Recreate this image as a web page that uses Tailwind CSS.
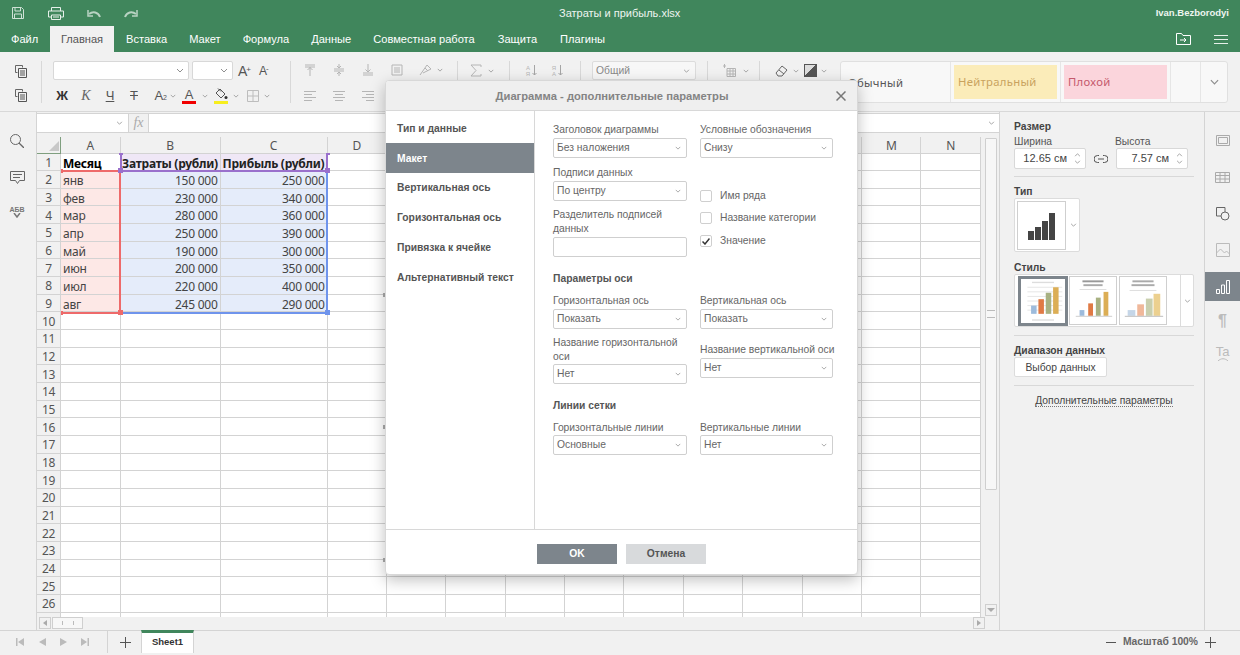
<!DOCTYPE html>
<html lang="ru">
<head>
  <meta charset="UTF-8" />
  <title>Затраты и прибыль.xlsx</title>
  <script src="https://cdn.jsdelivr.net/npm/@tailwindcss/browser@4"></script>
</head>
<body class="w-[1240px] h-[655px] overflow-hidden bg-[#f1f1f1] text-[#444] text-[10.3px] font-['Liberation_Sans',Arial,sans-serif]">

  <svg class="hidden">
    <symbol id="chev" viewBox="0 0 8 5"><path d="M1 1l3 3 3-3" fill="none" stroke="#8f8f8f" stroke-width="1"/></symbol>
    <symbol id="copy" viewBox="0 0 14 14"><path d="M1.5 1.5h7v2M1.5 1.5v7h2" fill="none" stroke="#666"/><path d="M4.5 4.5h8v9h-8z" fill="#f1f1f1" stroke="#555"/><path d="M6 7h5M6 9h5M6 11h5" stroke="#555"/></symbol>
  </svg>

  <!-- Header -->
  <header class="h-[52px] bg-[#40865c] text-white">
    <div class="h-[26px] flex items-center relative">
      <div class="flex items-center">
        <svg class="w-[12px] h-[12px] ml-[12px]" viewBox="0 0 12 12" fill="none" stroke="#cfe2d6"><path d="M.5.5h9l2 2v9H.5z"/><path d="M3 .5v3.5h5.5V.5M2.5 11.5V7h7v4.5"/></svg>
        <svg class="w-[16px] h-[13px] ml-[24px]" viewBox="0 0 16 13" fill="none" stroke="#e6f0ea"><path d="M3.500 4V.5h9V4M3.500 10H.5V4h15v6h-3"/><path d="M3.500 8h9v4.500h-9zM5 10h6"/></svg>
        <svg class="w-[14px] h-[9px] ml-[23px]" viewBox="0 0 14 9" fill="none" stroke="#b9d3c3" stroke-width="2"><path d="M13 8C11 3 6 2 2 5"/><path d="M1 1v6h5" stroke-width="1.500"/></svg>
        <svg class="w-[14px] h-[9px] ml-[23px]" viewBox="0 0 14 9" fill="none" stroke="#b9d3c3" stroke-width="2"><path d="M1 8c2-5 7-6 11-3"/><path d="M13 1v6H8" stroke-width="1.500"/></svg>
      </div>
      <div class="absolute left-[559px] top-[6px] text-[11px] leading-[14px] text-[#eef5f0]">Затраты и прибыль.xlsx</div>
      <div class="ml-auto mr-[11px] text-[9.500px] font-bold text-[#eef5f0]">Ivan.Bezborodyi</div>
    </div>
    <div class="h-[26px] flex items-end text-[11.100px]">
      <div class="w-[50px] h-[26px] leading-[26px] pl-[11px]">Файл</div>
      <div class="w-[64px] h-[26px] leading-[26px] text-center bg-[#f1f1f1] text-[#555]">Главная</div>
      <div class="h-[26px] leading-[26px] ml-[12px]">Вставка</div>
      <div class="h-[26px] leading-[26px] ml-[22px]">Макет</div>
      <div class="h-[26px] leading-[26px] ml-[22px]">Формула</div>
      <div class="h-[26px] leading-[26px] ml-[22px]">Данные</div>
      <div class="h-[26px] leading-[26px] ml-[22px]">Совместная работа</div>
      <div class="h-[26px] leading-[26px] ml-[23px]">Защита</div>
      <div class="h-[26px] leading-[26px] ml-[23px]">Плагины</div>
      <svg class="w-[15px] h-[12px] ml-auto mb-[7px]" viewBox="0 0 15 12" fill="none" stroke="#fff"><path d="M.5 11.500V.5h5l1.500 2h7.500v9z"/><path d="M4 7h6M8 5l2 2-2 2"/></svg>
      <svg class="w-[14px] h-[9px] ml-[23px] mr-[12px] mb-[8px]" viewBox="0 0 14 9" stroke="#e6f0ea"><path d="M0 .5h14M0 4.500h14M0 8.500h14"/></svg>
    </div>
  </header>

  <!-- Toolbar -->
  <div class="h-[60px] bg-[#f1f1f1] flex pt-[9px] text-[#555] border-b border-[#d8d8d8]">
    <div class="w-[41px] h-[44px] flex flex-col items-center justify-between py-[3px]">
      <svg class="w-[14px] h-[14px]"><use href="#copy"/></svg>
      <svg class="w-[14px] h-[14px]"><use href="#copy"/></svg>
    </div>
    <div class="w-px h-[42px] bg-[#d8d8d8]"></div>
    <div class="w-[248px] h-[44px] pl-[11px] flex flex-col justify-between">
      <div class="flex items-center h-[19px]">
        <div class="w-[136px] h-[19px] bg-white border border-[#d8d8d8] rounded-[2px] flex items-center justify-end pr-[4px]"><svg class="w-[8px] h-[5px]"><use href="#chev"/></svg></div>
        <div class="w-[41px] h-[19px] ml-[3px] bg-white border border-[#d8d8d8] rounded-[2px] flex items-center justify-end pr-[4px]"><svg class="w-[8px] h-[5px]"><use href="#chev"/></svg></div>
        <div class="ml-[5px] w-[14px] text-[14px] leading-[14px]">A<sup class="text-[8px] -ml-px">+</sup></div>
        <div class="ml-[7px] w-[14px] text-[12px] leading-[14px]">A<sup class="text-[8px] -ml-px">-</sup></div>
      </div>
      <div class="flex items-center h-[19px] text-[13px] -ml-[3px]">
        <div class="w-[24px] text-center font-bold text-[#333]">Ж</div>
        <div class="w-[24px] text-center italic font-['Liberation_Serif',serif] text-[14px] text-[#666]">К</div>
        <div class="w-[24px] text-center underline">Ч</div>
        <div class="w-[24px] text-center line-through">Т</div>
        <div class="w-[21px] text-right">A<span class="text-[7px]">2</span></div>
        <svg class="w-[6px] h-[4px] ml-[3px]"><use href="#chev"/></svg>
        <div class="w-[14px] ml-[6px] text-center leading-[13px] border-b-[3px] border-[#f00000]">A</div>
        <svg class="w-[6px] h-[4px] ml-[6px]"><use href="#chev"/></svg>
        <div class="w-[14px] ml-[6px] h-[16px] border-b-[3px] border-[#f7ee1e] flex justify-center">
          <svg class="w-[13px] h-[12px]" viewBox="0 0 13 12" fill="none" stroke="#555"><path d="M5 1l5 5-4 4-5-5z"/><path d="M3 .5l3 3"/><circle cx="11" cy="9.500" r="1.500" fill="#333" stroke="none"/></svg>
        </div>
        <svg class="w-[6px] h-[4px] ml-[5px]"><use href="#chev"/></svg>
        <svg class="w-[12px] h-[12px] ml-[8px]" viewBox="0 0 12 12" fill="none" stroke="#bdbdbd"><path d="M.5.5h11v11H.5zM6 .5v11M.5 6h11"/></svg>
        <svg class="w-[6px] h-[4px] ml-[5px]"><use href="#chev"/></svg>
      </div>
    </div>
    <div class="w-px h-[42px] bg-[#d8d8d8]"></div>
    <div class="w-[166px] h-[44px] flex flex-col justify-between pl-[13px] py-[3px]">
      <div class="flex items-center h-[12px]">
        <svg class="w-[12px] h-[12px]" viewBox="0 0 12 12" fill="none" stroke="#b5b5b5"><path d="M1 1h10M1 3h10M6 3v9M3.500 6L6 3.500 8.500 6"/></svg>
        <svg class="w-[12px] h-[12px] ml-[17px]" viewBox="0 0 12 12" fill="none" stroke="#b5b5b5"><path d="M1 5h10M1 7h10M6 0v4M6 8v4M4 2l2 2 2-2M4 10l2-2 2 2"/></svg>
        <svg class="w-[12px] h-[12px] ml-[17px]" viewBox="0 0 12 12" fill="none" stroke="#b5b5b5"><path d="M1 9h10M1 11h10M6 0v8M3.500 5.500L6 8l2.500-2.500"/></svg>
        <svg class="w-[12px] h-[12px] ml-[17px]" viewBox="0 0 12 12" fill="none" stroke="#b5b5b5"><path d="M1 1h10v10H1zM3 4h6M3 6h6M3 8h6"/></svg>
        <svg class="w-[13px] h-[12px] ml-[16px]" viewBox="0 0 13 12" fill="none" stroke="#b5b5b5"><path d="M1 11L8 1l4 4-8 4M6 4l3 3"/></svg>
        <svg class="w-[6px] h-[4px] ml-[5px]"><use href="#chev"/></svg>
      </div>
      <div class="flex items-center h-[12px]">
        <svg class="w-[12px] h-[11px]" viewBox="0 0 12 11" stroke="#b5b5b5"><path d="M0 .5h12M0 3.500h8M0 6.500h12M0 9.500h8"/></svg>
        <svg class="w-[12px] h-[11px] ml-[17px]" viewBox="0 0 12 11" stroke="#b5b5b5"><path d="M0 .5h12M2 3.500h8M0 6.500h12M2 9.500h8"/></svg>
        <svg class="w-[12px] h-[11px] ml-[17px]" viewBox="0 0 12 11" stroke="#b5b5b5"><path d="M0 .5h12M4 3.500h8M0 6.500h12M4 9.500h8"/></svg>
      </div>
    </div>
    <div class="w-px h-[42px] bg-[#d8d8d8]"></div>
    <div class="w-[51px] h-[19px] pl-[12px] flex items-center">
      <svg class="w-[12px] h-[13px]" viewBox="0 0 12 13" fill="none" stroke="#b5b5b5"><path d="M11 3V1H1l5 5.500L1 12h10v-2"/></svg>
      <svg class="w-[6px] h-[4px] ml-[6px]"><use href="#chev"/></svg>
    </div>
    <div class="w-px h-[19px] bg-[#d8d8d8]"></div>
    <div class="w-[70px] h-[19px] pl-[15px] flex items-center text-[#b5b5b5] text-[6px] leading-[6px]">
      <div class="w-[6px] text-center">А<br/>Я</div><svg class="w-[5px] h-[11px] ml-px" viewBox="0 0 5 11" fill="none" stroke="#a5a5a5"><path d="M2.500 0v10M.5 8l2 2 2-2"/></svg>
      <div class="w-[6px] ml-[14px] text-center">Я<br/>А</div><svg class="w-[5px] h-[11px] ml-px" viewBox="0 0 5 11" fill="none" stroke="#a5a5a5"><path d="M2.500 0v10M.5 8l2 2 2-2"/></svg>
    </div>
    <div class="w-px h-[19px] bg-[#d8d8d8]"></div>
    <div class="w-[126px] h-[19px] pl-[11px]">
      <div class="w-[104px] h-[19px] bg-[#f7f7f7] border border-[#dcdcdc] rounded-[2px] flex items-center pl-[3px] pr-[5px] text-[#888]">Общий<svg class="w-[7px] h-[4px] ml-auto"><use href="#chev"/></svg></div>
    </div>
    <div class="w-px h-[19px] bg-[#d8d8d8]"></div>
    <div class="w-[51px] h-[19px] pl-[15px] flex items-center">
      <svg class="w-[13px] h-[13px]" viewBox="0 0 13 13" fill="none" stroke="#b5b5b5"><path d="M4 4.500h8.500v8H4zM4 7h8.500M4 10h8.500M7 4.500v8M10 4.500v8M1.500 0v4M0 2h3"/></svg>
      <svg class="w-[6px] h-[4px] ml-[7px]"><use href="#chev"/></svg>
    </div>
    <div class="w-px h-[19px] bg-[#d8d8d8]"></div>
    <div class="w-[80px] h-[19px] pl-[15px] flex items-center">
      <svg class="w-[13px] h-[12px]" viewBox="0 0 13 12" fill="none" stroke="#666"><path d="M1 8l6-7 5 4-5 6H3zM4 5l5 4"/></svg>
      <svg class="w-[6px] h-[4px] ml-[5px]"><use href="#chev"/></svg>
      <div class="w-[13px] h-[13px] ml-[5px] border border-[#555] bg-[linear-gradient(135deg,#ddd_50%,#555_50%)]"></div>
      <svg class="w-[6px] h-[4px] ml-[4px]"><use href="#chev"/></svg>
    </div>
    <!-- cell styles -->
    <div class="w-[388px] h-[42px] bg-[#f8f8f8] border border-[#e0e0e0] rounded-[3px] flex text-[11.300px] tracking-[0.3px] font-['Noto_Sans',sans-serif]">
      <div class="w-[110px] leading-[42px] pl-[7px] border-r border-[#e6e6e6]">Обычный</div>
      <div class="w-[110px] p-[3px] border-r border-[#e6e6e6]"><div class="h-full bg-[#fbecb9] text-[#c9a35e] leading-[34px] pl-[4px]">Нейтральный</div></div>
      <div class="w-[110px] p-[3px] border-r border-[#e6e6e6]"><div class="h-full bg-[#fbd5dc] text-[#c5596c] leading-[34px] pl-[4px]">Плохой</div></div>
      <div class="w-[30px] border-r border-[#e6e6e6]"></div>
      <div class="flex-1 flex items-center justify-center"><svg class="w-[11px] h-[6px]"><use href="#chev"/></svg></div>
    </div>
  </div>

  <!-- Main -->
  <div class="h-[518px] flex">
    <!-- left sidebar -->
    <aside class="w-[37px] border-r border-[#d4d4d4] flex flex-col items-center pt-[22px] pr-[2px]">
      <svg class="w-[14px] h-[14px]" viewBox="0 0 14 14" fill="none" stroke="#666"><circle cx="5.500" cy="5.500" r="5"/><path d="M9 9l5 5" stroke-width="1.300"/></svg>
      <svg class="w-[15px] h-[13px] mt-[23px]" viewBox="0 0 15 13" fill="none" stroke="#666"><path d="M.5.5h14v9h-5l-2 3-2-3h-5z"/><path d="M3 3.500h9M3 6.500h7"/></svg>
      <div class="mt-[22px] text-[7px] leading-[7px] font-bold text-[#777] text-center">АБВ<svg class="w-[8px] h-[5px] mx-auto" viewBox="0 0 8 5" fill="none" stroke="#777" stroke-width="1.500"><path d="M1 0l3 4 3-4"/></svg></div>
    </aside>

    <!-- center: formula bar, sheet -->
    <section class="w-[962px]">
      <div class="h-[20px] mt-px flex bg-white border-y border-[#d4d4d4]">
        <div class="w-[92px] flex items-center justify-end pr-[5px] border-r border-[#d4d4d4]"><svg class="w-[7px] h-[4px]"><use href="#chev"/></svg></div>
        <div class="w-[20px] bg-[#f1f1f1] border-r border-[#d4d4d4] text-center italic font-['Liberation_Serif',serif] text-[14px] leading-[17px] text-[#aaa]">fx</div>
        <div class="flex-1 flex items-center justify-end pr-[4px]"><svg class="w-[7px] h-[4px]"><use href="#chev"/></svg></div>
      </div>
      <div class="h-[4px]"></div>
      <div class="h-[480px] flex">
        <div class="relative w-[944px] h-[480px] overflow-hidden bg-white">
          <div id="sheet" class="grid grid-cols-[24px_59.5px_100px_107px_repeat(11,59.4px)] grid-rows-[16.5px_repeat(27,17.67px)] font-['Noto_Sans',sans-serif] text-[12px] tracking-[-0.25px] text-[#444]"></div>
          <!-- select-all triangle -->
          <div class="absolute left-[12px] top-[4px] w-[10px] h-[10px] bg-[#c8c8c8] [clip-path:polygon(100%_0,100%_100%,0_100%)]"></div>
          <!-- ranges of the selected chart -->
          <div class="absolute left-[83px] top-[34px] w-[208px] h-[143px] border-r-2 border-b-2 border-[#6f94ec]"></div>
          <div class="absolute left-[24px] top-[33px] w-[60px] h-[143.500px] border-t-2 border-r-2 border-b-2 border-[#ee6a6a]"></div>
          <div class="absolute left-[83px] top-[17px] w-[208px] h-[18px] border-x-2 border-b-2 border-[#9a70cc]"></div>
          <div class="absolute left-[81px] top-[31px] w-[5px] h-[5px] bg-[#9a70cc]"></div>
          <div class="absolute left-[288px] top-[31px] w-[5px] h-[5px] bg-[#9a70cc]"></div>
          <div class="absolute left-[82px] top-[16px] w-[4px] h-[2px] bg-[#9a70cc]"></div>
          <div class="absolute left-[289px] top-[16px] w-[4px] h-[2px] bg-[#9a70cc]"></div>
          <div class="absolute left-[24px] top-[32px] w-[2px] h-[4px] bg-[#ee6a6a]"></div>
          <div class="absolute left-[24px] top-[174px] w-[2px] h-[4px] bg-[#ee6a6a]"></div>
          <div class="absolute left-[81px] top-[173px] w-[5px] h-[5px] bg-[#ee6a6a]"></div>
          <div class="absolute left-[288px] top-[173px] w-[5px] h-[5px] bg-[#6f94ec]"></div>
          <!-- chart handles peeking out beside the dialog -->
          <div class="absolute left-[346px] top-[156px] w-[2px] h-[4px] bg-[#aaa]"></div>
          <div class="absolute left-[346px] top-[288px] w-[2px] h-[4px] bg-[#aaa]"></div>
          <div class="absolute left-[346px] top-[421px] w-[2px] h-[4px] bg-[#aaa]"></div>
        </div>
        <!-- vertical scrollbar -->
        <div class="w-[18px] h-[480px] flex flex-col items-center pl-[2px] pt-[1px]">
          <div class="w-[12px] h-[352px] bg-[#f7f7f7] border border-[#cfcfcf] rounded-[1px] flex items-center justify-center"><div class="w-[8px] h-[8px] border-y border-[#bbb]"></div></div>
          <div class="mt-auto w-[12px] h-[12px] mb-[1px] border border-[#cfcfcf] flex items-center justify-center"><div class="border-x-[4px] border-x-transparent border-t-[4px] border-t-[#aaa]"></div></div>
        </div>
      </div>
      <!-- horizontal scrollbar -->
      <div class="h-[13px] flex items-start pl-[2px]">
        <div class="w-[12px] h-[12px] border border-[#cfcfcf] flex items-center justify-center"><div class="border-y-[3px] border-y-transparent border-r-[4px] border-r-[#aaa]"></div></div>
        <div class="w-[31px] h-[12px] ml-[1px] bg-[#f7f7f7] border border-[#cfcfcf] flex items-center justify-center"><div class="w-[12px] h-[4px] border-x border-[#bbb]"></div></div>
        <div class="ml-auto mr-[14px] w-[12px] h-[12px] border border-[#cfcfcf] flex items-center justify-center"><div class="border-y-[3px] border-y-transparent border-l-[4px] border-l-[#aaa]"></div></div>
      </div>
    </section>

    <!-- right panel -->
    <aside class="w-[205px] border-l border-[#d4d4d4] pl-[14px] pr-[10px]">
      <div class="font-bold h-[14px] leading-[16px] mt-[7px]">Размер</div>
      <div class="flex mt-[1px] text-[#555]">
        <div class="w-[72px] h-[14px] leading-[16px]">Ширина</div>
        <div class="ml-[29px] h-[14px] leading-[16px]">Высота</div>
      </div>
      <div class="flex items-center">
        <div class="w-[72px] h-[21px] bg-white border border-[#d8d8d8] rounded-[2px] flex items-center justify-end pr-[4px] text-[11px]">12.65 см<div class="ml-[7px] flex flex-col gap-[3px]"><svg class="w-[7px] h-[4px] rotate-180"><use href="#chev"/></svg><svg class="w-[7px] h-[4px]"><use href="#chev"/></svg></div></div>
        <svg class="w-[14px] h-[8px] mx-[8px]" viewBox="0 0 14 8" fill="none" stroke="#555"><path d="M5 .5H3.500a3.500 3.500 0 0 0 0 7H5M9 .5h1.500a3.500 3.500 0 0 1 0 7H9M4 4h6"/></svg>
        <div class="w-[72px] h-[21px] bg-white border border-[#d8d8d8] rounded-[2px] flex items-center justify-end pr-[4px] text-[11px]">7.57 см<div class="ml-[7px] flex flex-col gap-[3px]"><svg class="w-[7px] h-[4px] rotate-180"><use href="#chev"/></svg><svg class="w-[7px] h-[4px]"><use href="#chev"/></svg></div></div>
      </div>
      <div class="h-px bg-[#d8d8d8] mt-[7px]"></div>
      <div class="font-bold h-[14px] leading-[16px] mt-[7px]">Тип</div>
      <div class="w-[66px] h-[54px] bg-white border border-[#dcdcdc] rounded-[2px] flex items-center pl-[2px]">
        <div class="w-[49px] h-[49px] border border-[#cfcfcf] flex items-end justify-center pb-[9px] gap-[1px]">
          <div class="w-[6px] h-[9px] bg-[#444]"></div><div class="w-[6px] h-[13px] bg-[#444]"></div><div class="w-[6px] h-[19px] bg-[#444]"></div><div class="w-[6px] h-[27px] bg-[#444]"></div>
        </div>
        <svg class="w-[7px] h-[4px] ml-[4px]"><use href="#chev"/></svg>
      </div>
      <div class="font-bold h-[14px] leading-[16px] mt-[8px]">Стиль</div>
      <div class="w-[180px] h-[53px] bg-white border border-[#dcdcdc] rounded-[2px] flex items-center pl-[3px]">
        <svg class="w-[50px] h-[50px] border-[3px] border-[#7d858c]" viewBox="0 0 48 48"><rect width="48" height="48" fill="#fff"/><rect x="12" y="3" width="24" height="1.500" fill="#ddd"/><path d="M7 9h38M7 14h38M7 19h38M7 24h38M7 29h38M7 34h38" stroke="#e4e4e4"/><rect x="11" y="29" width="6" height="9" fill="#9dbbdc"/><rect x="19" y="22" width="6" height="16" fill="#e07a45"/><rect x="27" y="15" width="6" height="23" fill="#a8b182"/><rect x="35" y="9" width="6" height="29" fill="#dcae55"/><rect x="12" y="44" width="24" height="1.500" fill="#ddd"/></svg>
        <svg class="w-[48px] h-[49px] border border-[#cfcfcf] ml-px" viewBox="0 0 48 48"><rect width="48" height="48" fill="#fff"/><rect x="13" y="3" width="22" height="2" fill="#999"/><rect x="14" y="7" width="20" height="2" fill="#aaa"/><rect x="10" y="12" width="28" height="1" fill="#ddd"/><rect x="10" y="34" width="5" height="6" fill="#9dbbdc"/><rect x="19" y="27" width="5" height="13" fill="#e07a45"/><rect x="27" y="21" width="5" height="19" fill="#a8b182"/><rect x="35" y="15" width="5" height="25" fill="#dcae55"/><path d="M6 40.500h38" stroke="#ccc"/></svg>
        <svg class="w-[48px] h-[49px] border border-[#cfcfcf] ml-[2px]" viewBox="0 0 48 48"><rect width="48" height="48" fill="#fff"/><rect x="13" y="3" width="22" height="2" fill="#aaa"/><rect x="12" y="7" width="24" height="2" fill="#aaa"/><rect x="10" y="13" width="28" height="1" fill="#ddd"/><rect x="8" y="34" width="8" height="6" fill="#c5d6e8"/><rect x="18" y="28" width="7" height="12" fill="#f0b89a"/><rect x="27" y="22" width="7" height="18" fill="#c9cfae"/><rect x="35" y="17" width="7" height="23" fill="#ecd08f"/><path d="M5 40.500h40" stroke="#bbb"/></svg>
        <div class="ml-[13px] w-px h-full bg-[#dcdcdc]"></div>
        <svg class="w-[7px] h-[4px] ml-[3px]"><use href="#chev"/></svg>
      </div>
      <div class="h-px bg-[#d8d8d8] mt-[8px]"></div>
      <div class="font-bold h-[14px] leading-[16px] mt-[7px]">Диапазон данных</div>
      <div class="w-[93px] h-[20px] bg-white border border-[#dcdcdc] rounded-[2px] text-center leading-[20px]">Выбор данных</div>
      <div class="h-px bg-[#d8d8d8] mt-[8px]"></div>
      <div class="text-center mt-[8px] leading-[13px]"><span class="border-b border-dotted border-[#777]">Дополнительные параметры</span></div>
    </aside>

    <!-- right icon bar -->
    <nav class="flex-1 border-l border-[#d4d4d4] flex flex-col items-center">
      <svg class="w-[14px] h-[11px] mt-[23px]" viewBox="0 0 14 11" fill="none" stroke="#aaa"><path d="M.5.5h13v10H.5zM2.500 2.500h9v6h-9z"/></svg>
      <svg class="w-[15px] h-[11px] mt-[26px]" viewBox="0 0 15 11" fill="none" stroke="#aaa"><path d="M.5.5h14v10H.5zM.5 3.500h14M.5 7h14M5 .5v10M10 .5v10"/></svg>
      <svg class="w-[14px] h-[14px] mt-[24px]" viewBox="0 0 14 14" fill="none" stroke="#666"><path d="M5 9H.5V.5H9V5"/><circle cx="9" cy="9" r="4" fill="#f1f1f1"/></svg>
      <svg class="w-[14px] h-[14px] mt-[22px]" viewBox="0 0 14 14" fill="none" stroke="#bbb"><path d="M.5.5h13v13H.5zM.5 10l4-4 4 4 2-2 3 3"/></svg>
      <div class="w-full h-[29px] mt-[15px] bg-[#7d858c] flex items-center justify-center">
        <svg class="w-[14px] h-[14px]" viewBox="0 0 14 14" fill="none" stroke="#fff"><path d="M.5 9.500h3v4h-3zM5.500 5h3v8.500h-3zM10.500.5h3v13h-3z"/></svg>
      </div>
      <div class="mt-[10px] text-[16px] leading-[20px] font-bold text-[#bbb]">¶</div>
      <div class="mt-[15px] text-[13px] leading-[12px] text-[#bbb]">Ta</div>
      <svg class="w-[10px] h-[3px]" viewBox="0 0 10 3" fill="none" stroke="#bbb"><path d="M0 3c3-3 7-3 10 0"/></svg>
    </nav>
  </div>

  <!-- Bottom bar -->
  <footer class="h-[25px] border-t border-[#d4d4d4] flex items-start">
    <div class="flex items-center h-[22px] pl-[16px]">
      <svg class="w-[8px] h-[8px]" viewBox="0 0 8 8" fill="#bbb"><path d="M0 0h1.500v8H0zM8 0v8L2 4z"/></svg>
      <svg class="w-[7px] h-[8px] ml-[15px]" viewBox="0 0 7 8" fill="#bbb"><path d="M7 0v8L0 4z"/></svg>
      <svg class="w-[7px] h-[8px] ml-[14px]" viewBox="0 0 7 8" fill="#bbb"><path d="M0 0v8l7-4z"/></svg>
      <svg class="w-[8px] h-[8px] ml-[14px]" viewBox="0 0 8 8" fill="#bbb"><path d="M8 0H6.500v8H8zM0 0v8l6-4z"/></svg>
    </div>
    <div class="w-px h-[22px] bg-[#d4d4d4] ml-[18px]"></div>
    <svg class="w-[11px] h-[11px] ml-[12px] mt-[6px]" viewBox="0 0 11 11" stroke="#555"><path d="M5.500 0v11M0 5.500h11"/></svg>
    <div class="w-[53px] h-[23px] ml-[10px] -mt-px bg-white border-t-[3px] border-t-[#40865c] border-x border-x-[#d4d4d4] text-center text-[#333] text-[9.500px] font-bold leading-[18px]">Sheet1</div>
    <div class="ml-auto flex items-center h-[22px] pr-[24px] font-bold text-[#666]">
      <svg class="w-[10px] h-px" viewBox="0 0 10 1" stroke="#555"><path d="M0 .5h10"/></svg>
      <span class="ml-[7px]">Масштаб 100%</span>
      <svg class="w-[11px] h-[11px] ml-[7px]" viewBox="0 0 11 11" stroke="#555"><path d="M5.500 0v11M0 5.500h11"/></svg>
    </div>
  </footer>

  <!-- Dialog -->
  <div class="absolute left-[385px] top-[80px] w-[473px] h-[495px] bg-white rounded-[4px] border border-[#d8d8d8] shadow-[0_5px_15px_rgba(0,0,0,0.25)] flex flex-col overflow-hidden">
    <div class="h-[30px] shrink-0 bg-[#efefef] border-b border-[#d8d8d8] flex items-center justify-center relative font-bold text-[#848484] text-[11.200px] pr-[19px] pt-px">
      Диаграмма - дополнительные параметры
      <svg class="absolute right-[11px] top-[10px] w-[10px] h-[10px]" viewBox="0 0 10 10" stroke="#777" stroke-width="1.500"><path d="M.5.5l9 9M9.500.5l-9 9"/></svg>
    </div>
    <div class="flex-1 flex">
      <div class="w-[149px] border-r border-[#d8d8d8] pt-[2px] font-bold text-[#555]">
        <div class="h-[30px] leading-[32px] pl-[11px]">Тип и данные</div>
        <div class="h-[30px] leading-[31px] pl-[11px] bg-[#7d858c] text-white">Макет</div>
        <div class="h-[30px] leading-[30px] pl-[11px]">Вертикальная ось</div>
        <div class="h-[30px] leading-[30px] pl-[11px]">Горизонтальная ось</div>
        <div class="h-[30px] leading-[30px] pl-[11px]">Привязка к ячейке</div>
        <div class="h-[30px] leading-[30px] pl-[11px]">Альтернативный текст</div>
      </div>
      <div class="flex-1 pl-[18px] pt-[12px] text-[#666]">
        <div class="flex gap-[13px]">
          <div class="w-[134px]">
            <div class="h-[14px] leading-[14px] mb-px">Заголовок диаграммы</div>
            <div class="h-[20px] border border-[#cfcfcf] rounded-[2px] flex items-center justify-between px-[3px]">Без наложения<svg class="w-[6px] h-[4px] mr-[2px]"><use href="#chev"/></svg></div>
            <div class="h-[14px] leading-[14px] mt-[8px] mb-px">Подписи данных</div>
            <div class="h-[20px] border border-[#cfcfcf] rounded-[2px] flex items-center justify-between px-[3px]">По центру<svg class="w-[6px] h-[4px] mr-[2px]"><use href="#chev"/></svg></div>
            <div class="leading-[14px] mt-[7px] mb-px">Разделитель подписей данных</div>
            <div class="h-[20px] border border-[#cfcfcf] rounded-[2px]"></div>
          </div>
          <div class="w-[133px]">
            <div class="h-[14px] leading-[14px] mb-px">Условные обозначения</div>
            <div class="h-[20px] border border-[#cfcfcf] rounded-[2px] flex items-center justify-between px-[3px]">Снизу<svg class="w-[6px] h-[4px] mr-[2px]"><use href="#chev"/></svg></div>
            <div class="flex items-center mt-[32px] h-[12px]"><div class="w-[12px] h-[12px] border border-[#cfcfcf] rounded-[2px]"></div><span class="ml-[8px]">Имя ряда</span></div>
            <div class="flex items-center mt-[10px] h-[12px]"><div class="w-[12px] h-[12px] border border-[#cfcfcf] rounded-[2px]"></div><span class="ml-[8px]">Название категории</span></div>
            <div class="flex items-center mt-[11px] h-[12px]"><div class="w-[12px] h-[12px] border border-[#cfcfcf] rounded-[2px] flex items-center justify-center"><svg class="w-[8px] h-[7px]" viewBox="0 0 8 7" fill="none" stroke="#333" stroke-width="1.500"><path d="M.5 3.500l2.500 2.500L7.500.5"/></svg></div><span class="ml-[8px]">Значение</span></div>
          </div>
        </div>
        <div class="h-[14px] leading-[14px] mt-[15px] font-bold text-[#555]">Параметры оси</div>
        <div class="flex gap-[13px] mt-[8px]">
          <div class="w-[134px]">
            <div class="h-[14px] leading-[14px] mb-px">Горизонтальная ось</div>
            <div class="h-[20px] border border-[#cfcfcf] rounded-[2px] flex items-center justify-between px-[3px]">Показать<svg class="w-[6px] h-[4px] mr-[2px]"><use href="#chev"/></svg></div>
            <div class="leading-[14px] mt-[7px]">Название горизонтальной оси</div>
            <div class="h-[20px] border border-[#cfcfcf] rounded-[2px] flex items-center justify-between px-[3px]">Нет<svg class="w-[6px] h-[4px] mr-[2px]"><use href="#chev"/></svg></div>
          </div>
          <div class="w-[133px]">
            <div class="h-[14px] leading-[14px] mb-px">Вертикальная ось</div>
            <div class="h-[20px] border border-[#cfcfcf] rounded-[2px] flex items-center justify-between px-[3px]">Показать<svg class="w-[6px] h-[4px] mr-[2px]"><use href="#chev"/></svg></div>
            <div class="h-[14px] leading-[14px] mt-[14px] mb-px whitespace-nowrap">Название вертикальной оси</div>
            <div class="h-[20px] border border-[#cfcfcf] rounded-[2px] flex items-center justify-between px-[3px]">Нет<svg class="w-[6px] h-[4px] mr-[2px]"><use href="#chev"/></svg></div>
          </div>
        </div>
        <div class="h-[14px] leading-[14px] mt-[15px] font-bold text-[#555]">Линии сетки</div>
        <div class="flex gap-[13px] mt-[8px]">
          <div class="w-[134px]">
            <div class="h-[14px] leading-[14px]">Горизонтальные линии</div>
            <div class="h-[20px] border border-[#cfcfcf] rounded-[2px] flex items-center justify-between px-[3px]">Основные<svg class="w-[6px] h-[4px] mr-[2px]"><use href="#chev"/></svg></div>
          </div>
          <div class="w-[133px]">
            <div class="h-[14px] leading-[14px]">Вертикальные линии</div>
            <div class="h-[20px] border border-[#cfcfcf] rounded-[2px] flex items-center justify-between px-[3px]">Нет<svg class="w-[6px] h-[4px] mr-[2px]"><use href="#chev"/></svg></div>
          </div>
        </div>
      </div>
    </div>
    <div class="h-[45px] shrink-0 border-t border-[#d8d8d8] flex items-start pt-[14px] justify-center gap-[9px] font-bold">
      <div class="w-[80px] h-[20px] bg-[#7d858c] text-white text-center leading-[20px]">OK</div>
      <div class="w-[80px] h-[20px] bg-[#d8dadc] text-[#555] text-center leading-[20px]">Отмена</div>
    </div>
  </div>

  <script>
    const letters = ['A','B','C','D','E','F','G','H','I','J','K','L','M','N'];
    const data = {
      1: ['Месяц', 'Затраты (рубли)', 'Прибыль (рубли)'],
      2: ['янв', '150 000', '250 000'],
      3: ['фев', '230 000', '340 000'],
      4: ['мар', '280 000', '360 000'],
      5: ['апр', '250 000', '390 000'],
      6: ['май', '190 000', '300 000'],
      7: ['июн', '200 000', '350 000'],
      8: ['июл', '220 000', '400 000'],
      9: ['авг', '245 000', '290 000']
    };
    const line = 'border-r border-b border-[#d3d3d3] ';
    const head = line + 'bg-[#f1f1f1] flex items-center justify-center text-[#555] pt-[2px] overflow-hidden ';
    const sheet = document.getElementById('sheet');

    const add = (cls, text) => {
      const el = document.createElement('div');
      el.className = cls;
      if (text) el.textContent = text;
      sheet.appendChild(el);
    };

    add(head + 'border-r-[#7f9f7f] border-b-[#7f9f7f]');
    letters.forEach(l => add(head, l));
    for (let r = 1; r <= 27; r++) {
      add(head, r);
      letters.forEach((l, i) => {
        const v = data[r] && data[r][i];
        let cls = line + 'overflow-hidden whitespace-nowrap leading-[20px] ';
        if (r === 1 && i === 0) cls += 'font-bold text-black pl-[2px] ';
        else if (r === 1 && i < 3) cls += 'font-bold text-[#222] text-center bg-[#efe7f6] ';
        else if (v && i === 0) cls += 'pl-[2px] bg-[#fde8e6] ';
        else if (v) cls += 'text-right pr-[2px] bg-[#e5ecfa] ';
        add(cls, v);
      });
    }
  </script>
</body>
</html>
